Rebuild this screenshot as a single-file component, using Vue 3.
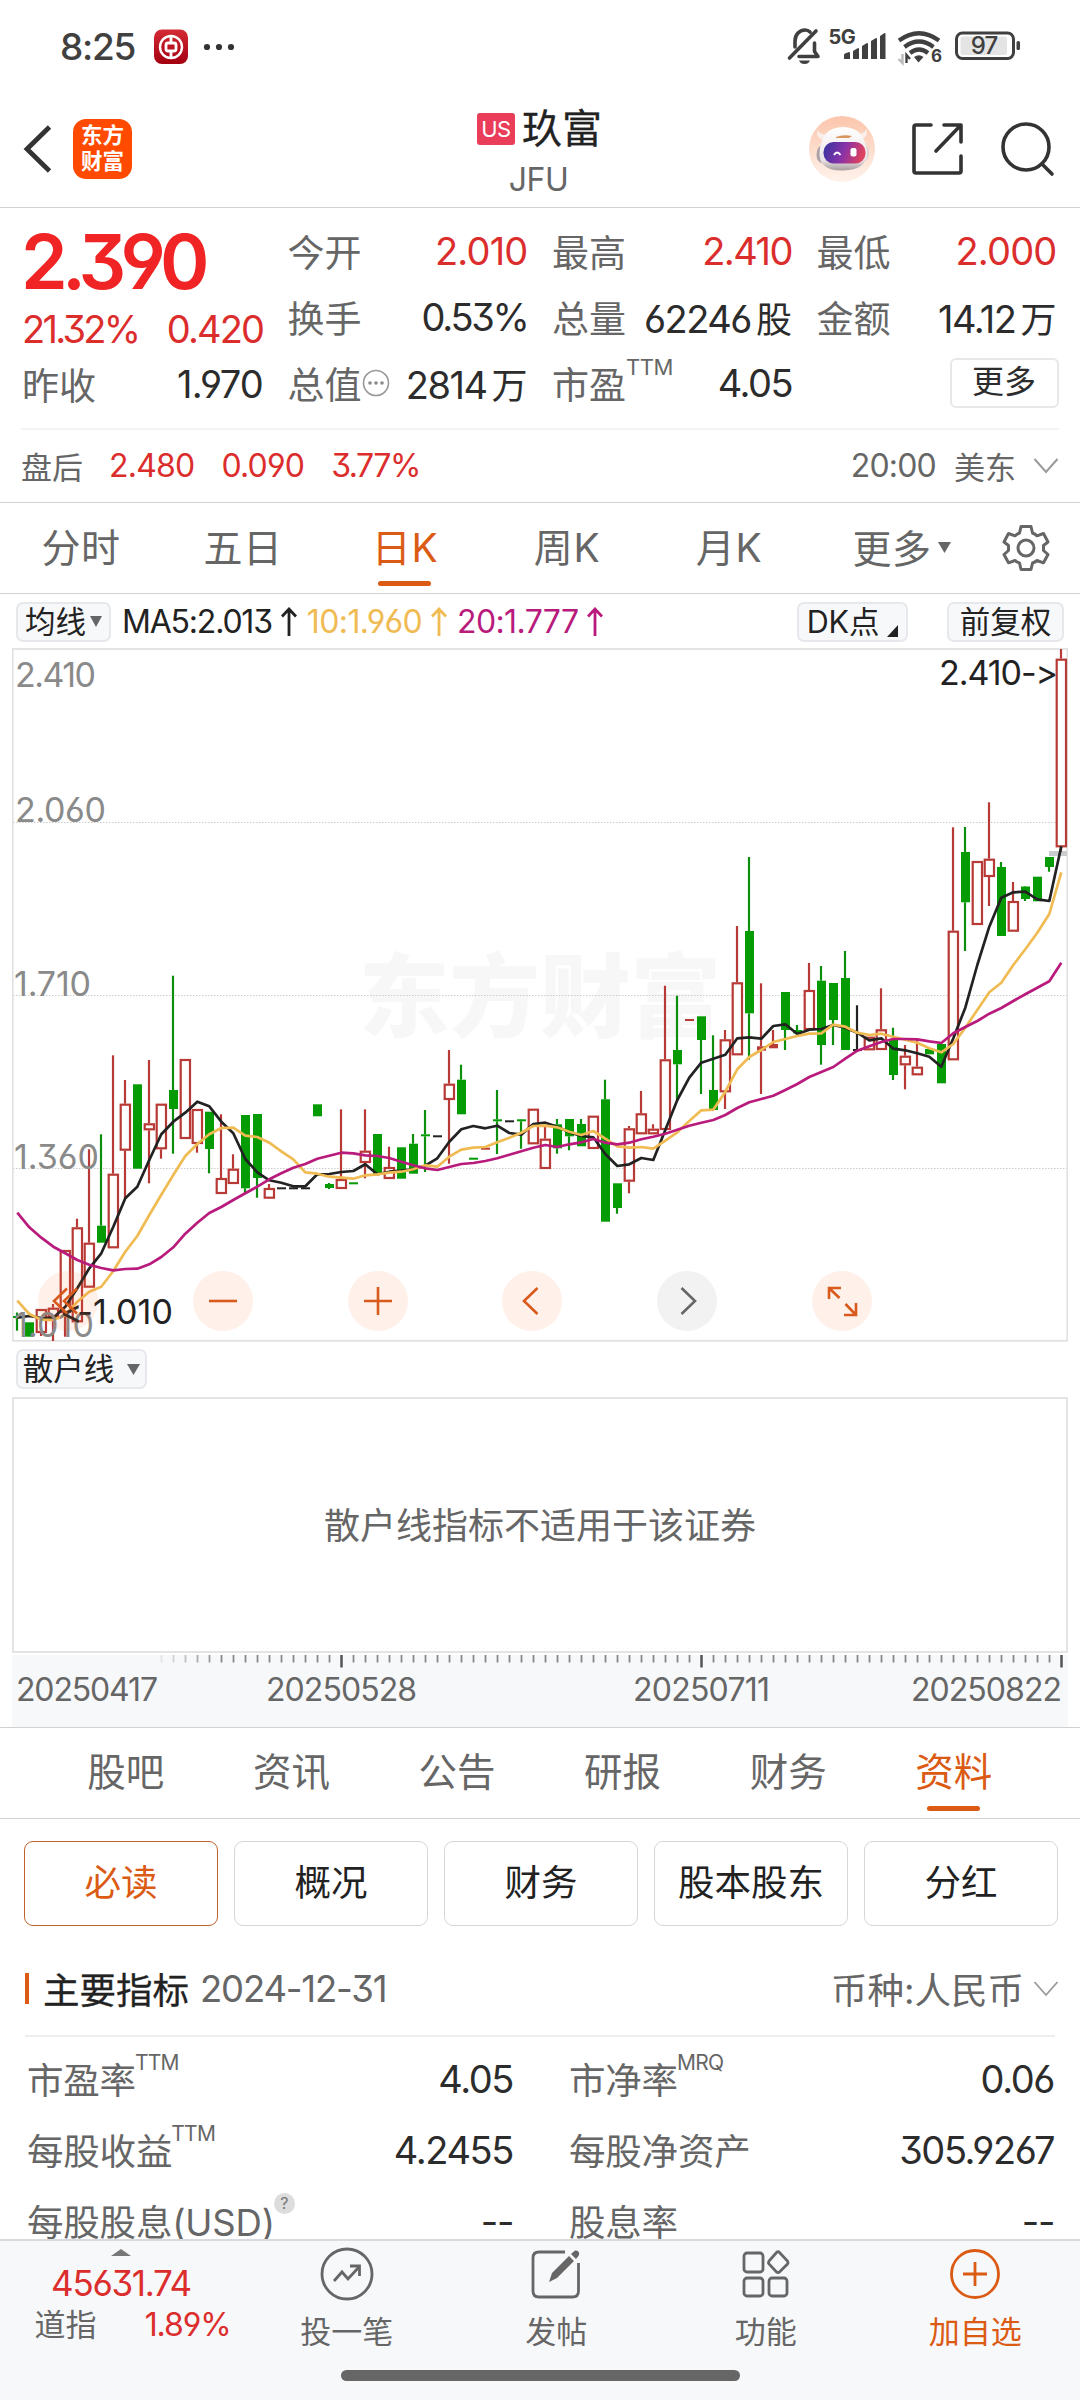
<script setup>
const stats = [
  [{ k: '今开', v: '2.010', c: 'up wide' }, { k: '换手', v: '0.53%', c: 'tight' }, { k: '总值', v: '2814', u: '万', info: true }],
  [{ k: '最高', v: '2.410', c: 'up' }, { k: '总量', v: '62246', u: '股' }, { k: '市盈', s: 'TTM', v: '4.05' }],
  [{ k: '最低', v: '2.000', c: 'up wide' }, { k: '金额', v: '14.12', u: '万' }, { more: true }],
]

const periods = ['分时', '五日', '日K', '周K', '月K']
const averages = [
  { t: 'MA5:2.013', c: 'ma5' },
  { t: '10:1.960', c: 'ma10' },
  { t: '20:1.777', c: 'ma20' },
]
const sections = ['股吧', '资讯', '公告', '研报', '财务', '资料']
const chips = ['必读', '概况', '财务', '股本股东', '分红']

const metrics = [
  [{ k: '市盈率', s: 'TTM', v: '4.05' }, { k: '市净率', s: 'MRQ', v: '0.06' }],
  [{ k: '每股收益', s: 'TTM', v: '4.2455' }, { k: '每股净资产', v: '305.9267' }],
  [{ k: '每股股息(USD)', q: true, v: '--' }, { k: '股息率', v: '--' }],
]

// kind, high, body top, body bottom, low
const candles = [
  ['g', 1312.5, 1316, 1318, 1330.7], ['g', 1322.3, 1322.3, 1336.7, 1336.7], ['r', 1309, 1309, 1333, 1336],
  ['r', 1304, 1307.7, 1318, 1341], ['r', 1250, 1250, 1313, 1336.7], ['r', 1218.7, 1227.3, 1322.3, 1322.3],
  ['r', 1149.3, 1242.7, 1287.7, 1287.7], ['g', 1134.3, 1225.7, 1242.7, 1242.7], ['r', 1055.3, 1173.7, 1248.3, 1248.3],
  ['r', 1080, 1103.7, 1150.7, 1198.3], ['g', 1084.3, 1084.3, 1168.7, 1168.7], ['r', 1060, 1123.3, 1130.3, 1183.3],
  ['r', 1103.7, 1103.7, 1149.3, 1158.7], ['g', 975.7, 1090, 1109, 1153.7], ['r', 1059, 1059, 1139, 1139],
  ['r', 1109, 1109, 1144, 1152.7], ['g', 1111.7, 1111.7, 1149, 1173.3], ['r', 1114.3, 1178, 1194, 1194],
  ['r', 1154.3, 1168.7, 1184, 1184], ['g', 1115, 1115, 1188.3, 1193.3], ['g', 1114, 1114, 1178, 1197.7],
  ['r', 1184, 1188, 1198.7, 1198.7], ['k', 1187.3, 1187.3, 1189.3, 1189.3], ['k', 1187.3, 1187.3, 1189.3, 1189.3],
  ['k', 1187.3, 1187.3, 1189.3, 1189.3], ['g', 1104.3, 1104.3, 1116.3, 1116.3], ['g', 1183, 1184, 1188, 1189],
  ['r', 1109.3, 1179, 1189, 1189], ['g', 1182.3, 1182.3, 1184.3, 1184.3], ['r', 1109.3, 1150.7, 1163, 1178.3],
  ['g', 1134, 1134, 1174, 1174], ['r', 1146.7, 1167, 1179, 1179], ['g', 1147.3, 1147.3, 1178.7, 1178.7],
  ['g', 1134, 1143.7, 1173.7, 1173.7], ['g', 1110, 1134.3, 1136.3, 1172], ['k', 1135.3, 1135.3, 1137.3, 1137.3],
  ['r', 1050, 1083.7, 1100, 1163.7], ['g', 1064.7, 1079.7, 1114.3, 1114.3], ['g', 1157.7, 1157.7, 1159.7, 1159.7],
  ['s', 1147.7, 1147.7, 1149.7, 1149.7], ['g', 1090, 1119.3, 1121.3, 1154], ['k', 1120.3, 1120.3, 1122.3, 1122.3],
  ['g', 1119, 1119.3, 1121.3, 1148.7], ['r', 1108.7, 1108.7, 1144.3, 1144.3], ['r', 1126.7, 1138.7, 1169, 1169],
  ['g', 1119, 1124.3, 1148.3, 1153.7], ['g', 1119, 1119, 1136.3, 1150.3], ['g', 1119, 1124, 1146.3, 1146.3],
  ['r', 1115.7, 1115.7, 1149, 1149], ['g', 1079.7, 1099.3, 1221.7, 1221.7], ['g', 1183.3, 1183.3, 1208, 1213.7],
  ['r', 1126, 1128.3, 1181.7, 1193.3], ['r', 1091, 1113.3, 1134.3, 1134.3], ['r', 1124.3, 1128.7, 1134.3, 1134.3],
  ['r', 985.7, 1059.3, 1130, 1130], ['g', 995.7, 1050, 1064.3, 1100], ['s', 1019, 1019, 1021, 1021],
  ['g', 1016.3, 1016.3, 1040, 1094], ['g', 1035.3, 1090, 1110, 1110], ['r', 1030, 1039.3, 1092.3, 1109],
  ['r', 926, 982.3, 1055.3, 1055.3], ['g', 857, 931, 1013.3, 1059.7], ['s', 983.3, 1046.3, 1050.7, 1094],
  ['s', 1030, 1044, 1048.3, 1048.3], ['g', 992, 992, 1030, 1050], ['g', 1025, 1030, 1033.3, 1033.3],
  ['r', 963, 990, 1030, 1030], ['g', 966, 980.7, 1045, 1064.7], ['g', 983, 983, 1020, 1045],
  ['g', 951, 978, 1050, 1050], ['k', 1005.3, 1049, 1051, 1051], ['r', 1036.7, 1036.7, 1050.3, 1050.3],
  ['r', 988.3, 1029.3, 1050, 1050], ['g', 1027.7, 1039.3, 1075, 1080], ['r', 1045, 1055.7, 1065.3, 1089.3],
  ['r', 1040, 1066.7, 1075.3, 1075.3], ['g', 1049, 1049, 1054.3, 1054.3], ['g', 1044, 1044, 1083.3, 1083.3],
  ['r', 827.3, 930.7, 1060.3, 1060.3], ['g', 827, 852, 902.3, 951], ['r', 861, 861, 925, 925],
  ['r', 802.3, 858.7, 877, 906], ['g', 862, 867, 936, 936], ['r', 882, 901, 931.7, 931.7],
  ['g', 886, 886.5, 899, 901], ['g', 876.7, 876.7, 901.3, 901.3], ['g', 857, 857, 867, 871.7],
  ['r', 649, 658.7, 847.3, 851.7],
].map(([kind, high, top, bottom, low], i) => ({ kind, high, top, bottom, low, x: 17 + i * 12 }))

const toPoints = (ys) => ys.map((y, i) => `${17.3 + i * 12},${y}`).join(' ')
const ma5 = toPoints([1317.7, 1316, 1318, 1317.7, 1306.7, 1288.3, 1268.3, 1253.3, 1226.7, 1198.3, 1186.7, 1160, 1134.3, 1121.7, 1112.7, 1101.7, 1106.3, 1121.7, 1133.3, 1159, 1172.3, 1180.3, 1182.7, 1186.3, 1186.3, 1174.3, 1174, 1172, 1171, 1164.3, 1174.3, 1171.7, 1170.7, 1169.3, 1165.7, 1158.3, 1141.7, 1129.3, 1126, 1128.3, 1125.7, 1133, 1134.7, 1124, 1122.7, 1126.7, 1132.3, 1136, 1137.3, 1154, 1166, 1164.3, 1158, 1160, 1130, 1100, 1077.7, 1062.7, 1058.7, 1054.7, 1038.3, 1037.3, 1038.7, 1026, 1024.3, 1034, 1029.7, 1029, 1025, 1027.7, 1032.7, 1040.3, 1038.3, 1048.7, 1050.3, 1053.3, 1056.7, 1066.7, 1038.3, 1007.7, 965, 926.7, 897.7, 892.3, 891.7, 899.3, 901, 846.3])
const ma10 = toPoints([1300.7, 1314, 1319.7, 1320, 1315, 1301.7, 1291.7, 1286.7, 1271, 1251.7, 1236, 1215, 1194.7, 1175, 1156, 1144, 1134.3, 1128, 1127.7, 1135.7, 1137, 1142.7, 1151.3, 1159.3, 1172.3, 1173.7, 1176.7, 1177.7, 1178.7, 1175.3, 1174.3, 1172.7, 1171.7, 1169.3, 1165.3, 1166.7, 1156.7, 1149.7, 1147.7, 1147, 1142.3, 1137.7, 1132.7, 1126, 1125.7, 1127.3, 1131.7, 1135, 1131, 1138.7, 1146.3, 1147.7, 1147, 1148.7, 1140.7, 1132.3, 1121, 1110.3, 1109.7, 1091.7, 1069.3, 1057, 1050, 1042, 1039, 1036, 1033.7, 1033.3, 1024.7, 1026.7, 1032.7, 1035, 1033.7, 1036.7, 1039.7, 1042.7, 1048.3, 1052.3, 1044, 1027.7, 1010, 992.3, 982.7, 965, 949.3, 932.7, 914, 872.3])
const ma20 = toPoints([1212.7, 1227.3, 1237.7, 1246.7, 1253.3, 1260, 1264.7, 1268, 1270.3, 1269, 1268.7, 1264.3, 1257, 1247.3, 1233.7, 1222.7, 1213, 1207, 1200, 1193.3, 1186.7, 1179.3, 1173.3, 1167.7, 1164, 1158.7, 1155.7, 1152.7, 1153.3, 1155.3, 1156, 1158, 1161.7, 1165.3, 1168.3, 1170, 1167, 1164, 1163, 1161, 1158.3, 1154.7, 1151.3, 1147.7, 1145, 1147, 1144.3, 1142.3, 1139, 1142.7, 1144.3, 1142.7, 1139.3, 1136.7, 1133.7, 1129.7, 1125.7, 1122.7, 1120, 1115, 1108, 1102.3, 1099, 1095.7, 1090, 1084, 1077, 1072, 1067, 1058.7, 1050.7, 1046.3, 1042, 1039, 1039, 1039.3, 1041.3, 1043, 1033.3, 1027, 1021, 1013.7, 1008, 1001, 994.3, 987.7, 981.3, 962.7])

const ticks = Array.from({ length: 76 }, (_, n) => n + 12).map((i) => ({
  x: 17.5 + i * 12,
  major: i === 27 || i === 57 || i === 87,
  o: Math.min(1, (i - 11) / 6),
}))
</script>

<template>
  <div class="page">
    <header class="status">
      <span class="clock">8:25</span>
      <svg class="boc" width="36" height="36" viewBox="0 0 36 36">
        <defs><linearGradient id="bocg" x1="0" y1="0" x2="0" y2="1"><stop offset="0" stop-color="#d42a35" /><stop offset="1" stop-color="#a30010" /></linearGradient></defs>
        <rect x="1" y="0.5" width="34" height="34.5" rx="8" fill="url(#bocg)" />
        <g fill="none" stroke="#fff"><circle cx="18" cy="18" r="11" stroke-width="2.4" /><rect x="13" y="14" width="10" height="8" rx="2" stroke-width="2.8" /><path d="M18 6.500v7M18 22.500v7" stroke-width="2.8" /></g>
      </svg>
      <svg class="dots" width="34" height="10" viewBox="0 0 34 10" fill="#333"><circle cx="6" cy="5" r="3.1" /><circle cx="18" cy="5" r="3.1" /><circle cx="30" cy="5" r="3.1" /></svg>
      <svg class="sys" width="240" height="44" viewBox="786 24 240 44">
        <g fill="none" stroke="#404040" stroke-width="3.600" stroke-linecap="round" stroke-linejoin="round">
          <path d="M795 47V41c0-6 4-11 10-11 2 0 4 1 5 2M799 56.500h19l-3.500-5V43M789.500 58 816 31" />
        </g>
        <path d="M799 60.500h11q-1.500 3.500-5.500 3.500t-5.500-3.500z" fill="#404040" />
        <text x="828.500" y="44" class="fiveg">5G</text>
        <g fill="#404040">
          <path d="M844 59v-4q0-1 1-1.500l4-1.500q1 0 1 1v6zM853 59v-8l5-3q1 0 1 1v10zM862 59V46l5-3q1 0 1 1v15zM871 59V41l5-3q1 0 1 1v20zM880 59V36l4.500-3q1 0 1 1v25z" />
        </g>
        <g fill="none" stroke="#404040" stroke-width="4.200">
          <path d="M899 40.500q20-14.500 40 0M904.500 47q14.500-11 29 0M910 53q9-7 18 0" />
        </g>
        <path d="M914 57q5-3.500 9.500 0l-5 5.500z" fill="#404040" />
        <path d="M902.500 54v9l-4-4" stroke="#bbb" stroke-width="2.400" fill="none" />
        <path d="M906.500 63v-8l3.500 4" stroke="#404040" stroke-width="2.400" fill="none" />
        <text x="931" y="62" class="six">6</text>
        <rect x="956.500" y="33" width="57" height="25.500" rx="6" fill="#fff" stroke="#404040" stroke-width="3" />
        <rect x="960.500" y="36.500" width="46.500" height="18.500" rx="2" fill="#e4e4e4" />
        <rect x="1016.500" y="41" width="3.500" height="9" rx="1.500" fill="#404040" />
        <text x="984" y="53.800" text-anchor="middle" class="pct">97</text>
      </svg>
    </header>

    <header class="titlebar">
      <div class="left">
        <svg width="32" height="54" viewBox="0 0 32 54"><path d="M27.500 5 5 27l22.500 22" fill="none" stroke="#333" stroke-width="4.800" /></svg>
        <div class="logo"><span>东方</span><span>财富</span></div>
      </div>
      <div class="name">
        <div class="nm"><span class="us">US</span><span>玖富</span></div>
        <div class="code">JFU</div>
      </div>
      <div class="right">
        <svg width="66" height="68" viewBox="0 0 66 68">
          <defs>
            <linearGradient id="av" x1="0" y1="0" x2="0" y2="1"><stop offset="0" stop-color="#fbc5ab" /><stop offset="1" stop-color="#fff3ec" /></linearGradient>
            <linearGradient id="vis" x1="0" y1="0" x2="1" y2="0.200"><stop offset="0" stop-color="#3233a0" /><stop offset="0.550" stop-color="#8a32a8" /><stop offset="1" stop-color="#dc4260" /></linearGradient>
            <linearGradient id="head" x1="0" y1="0" x2="0" y2="1"><stop offset="0" stop-color="#fff" /><stop offset="0.750" stop-color="#ece4e6" /><stop offset="1" stop-color="#a79da0" /></linearGradient>
          </defs>
          <circle cx="33" cy="34" r="33" fill="url(#av)" />
          <path d="M14 25q-8-3-5.500-10 2 5 10 4zM53 24q7-3 4.500-10-2 5-10 5z" fill="#fbeee9" />
          <path d="M14 30q-5 1-6 6-2 9 4 12l3-2z" fill="#aaa2a6" /><path d="M54 30q5 1 6 6 1 8-5 11z" fill="#e0d3d4" />
          <path d="M10.500 38Q12 12 34 12t24 26q0 17-24 17.500T10.500 38z" fill="url(#head)" />
          <path d="M27 22q7-3 16-1l-3 2H27z" fill="#d9965c" />
          <rect x="14.500" y="27" width="42" height="21.500" rx="10" fill="url(#vis)" />
          <path d="M25 40q3-5 6.500 0" fill="none" stroke="#fff" stroke-width="2" /><rect x="41.500" y="33" width="6" height="8.500" rx="2" fill="#fff" />
        </svg>
        <svg width="54" height="54" viewBox="0 0 54 54" fill="none" stroke="#333" stroke-width="3.600" stroke-linecap="round" stroke-linejoin="round"><path d="M20 3H5Q3 3 3 5v44q0 2 2 2h43q2 0 2-2V34M33 3h17v17M49 4 25 29" /></svg>
        <svg width="54" height="56" viewBox="0 0 54 56" fill="none" stroke="#333" stroke-width="3.600" stroke-linecap="round"><circle cx="25" cy="26" r="23" /><path d="m41 43 10 10" /></svg>
      </div>
    </header>

    <section class="quote">
      <div class="grid">
        <div class="main">
          <div class="price">2.390</div>
          <div class="line chg"><span class="num up tight">21.32%</span><span class="num up">0.420</span></div>
          <div class="line"><span class="lab">昨收</span><span class="num wide">1.970</span></div>
        </div>
        <div v-for="(col, ci) in stats" :key="ci" class="scol">
          <div v-for="(s, si) in col" :key="si" class="line">
            <template v-if="s.more"><span></span><span class="morebtn">更多</span></template>
            <template v-else>
              <span class="lab">{{ s.k }}<sup v-if="s.s">{{ s.s }}</sup>
                <svg v-if="s.info" width="28" height="28" viewBox="0 0 28 28"><circle cx="14" cy="14" r="12.500" fill="none" stroke="#999" stroke-width="1.600" /><g fill="#888"><circle cx="8" cy="14" r="1.800" /><circle cx="14" cy="14" r="1.800" /><circle cx="20" cy="14" r="1.800" /></g></svg>
              </span>
              <span class="num" :class="s.c">{{ s.v }}<i v-if="s.u">{{ s.u }}</i></span>
            </template>
          </div>
        </div>
      </div>
      <div class="after">
        <span class="alab">盘后</span><span class="up">2.480</span><span class="up">0.090</span><span class="up">3.77%</span>
        <span class="time">20:00</span><span class="alab east">美东</span>
        <svg width="26" height="18" viewBox="0 0 26 18"><path d="m1.500 2 11.500 13L24.500 2" fill="none" stroke="#999" stroke-width="2" /></svg>
      </div>
    </section>

    <nav class="periods">
      <span v-for="p in periods" :key="p" :class="['tab', { on: p === '日K' }]">{{ p }}</span>
      <span class="tab wide">更多<svg width="14" height="12" viewBox="0 0 14 12"><path d="M0 0h13L6.500 11z" fill="#666" /></svg></span>
      <svg class="gear" width="50" height="50" viewBox="-25 -25 50 50" fill="none" stroke="#666" stroke-width="3" stroke-linejoin="round">
        <path d="M-5-21.500H5L6.500-15Q9-14 11-12.200L17.500-14.500 22-6 17.500-2.500V2.500L22 6.500 17.500 14.800 11 12.500Q9 14.200 6.500 15L5 21.500H-5L-6.500 15Q-9 14.200-11 12.500L-17.500 14.800-22 6.500-17.500 2.500V-2.500L-22-6-17.500-14.500-11-12.200Q-9-14-6.500-15z" /><circle r="8" />
      </svg>
    </nav>

    <div class="mabar">
      <span class="pill avg">均线<svg width="12" height="11" viewBox="0 0 12 11"><path d="M0 0h12L6 11z" fill="#666" /></svg></span>
      <span v-for="a in averages" :key="a.t" :class="['ma', a.c]">{{ a.t }}<svg width="16" height="30" viewBox="0 0 16 30"><path d="M8 29V2M1 9.500 8 2l7 7.500" fill="none" stroke="currentColor" stroke-width="2.800" /></svg></span>
      <span class="pill dk">DK点<svg width="11" height="12" viewBox="0 0 11 12"><path d="M11 0v12H0z" fill="#222" /></svg></span>
      <span class="pill fq">前复权</span>
    </div>

    <section class="chart">
      <svg width="1056" height="694" viewBox="12 648 1056 694">
        <text x="359" y="1030" class="wm">东方财富</text>
        <g stroke="#ccc" stroke-width="1" stroke-dasharray="1.500 1.500"><path d="M13 822.500H1067M13 995.500H1067M13 1168.500H1067" /></g>
        <rect x="12.700" y="649" width="1054.600" height="691.800" fill="none" stroke="#e2e2e2" stroke-width="1.800" />
        <rect x="1049" y="851" width="18" height="5" fill="#c9cdd0" />
        <g v-for="(c, i) in candles" :key="i" :class="c.kind">
          <path v-if="c.high < c.top" :d="`M${c.x} ${c.high}V${c.top}`" />
          <path v-if="c.low > c.bottom" :d="`M${c.x} ${c.bottom}V${c.low}`" />
          <rect v-if="c.kind === 'r'" :x="c.x - 4.300" :y="c.top + 1" width="9.300" :height="c.bottom - c.top - 2" />
          <rect v-else :x="c.x - 4" :y="c.top" width="9" :height="c.bottom - c.top" />
        </g>
        <g class="curve"><polyline :points="ma5" stroke="#222" /><polyline :points="ma10" stroke="#efbb52" /><polyline :points="ma20" stroke="#b81b7c" /></g>
        <g class="ax">
          <text x="15" y="687" textLength="81">2.410</text><text x="15" y="822" textLength="91">2.060</text><text x="14" y="996" textLength="77">1.710</text><text x="14" y="1169" textLength="85">1.360</text><text x="14" y="1337" textLength="80">1.010</text>
        </g>
        <g class="mark"><text x="939" y="685" textLength="119">2.410-&gt;</text><text x="60" y="1324" textLength="33">&lt;-</text><text x="93" y="1324" textLength="80">1.010</text></g>
      </svg>
      <div class="ctl">
        <span><svg width="60" height="60" viewBox="0 0 60 60"><path d="M29 17.500 16 30l13 12.500M39 17.500 26 30l13 12.500" /></svg></span>
        <span><svg width="60" height="60" viewBox="0 0 60 60"><path d="M16 30h28" /></svg></span>
        <span><svg width="60" height="60" viewBox="0 0 60 60"><path d="M16 30h28M30 16v28" /></svg></span>
        <span><svg width="60" height="60" viewBox="0 0 60 60"><path d="M35.500 17 22 30l13.500 13" /></svg></span>
        <span class="off"><svg width="60" height="60" viewBox="0 0 60 60"><path d="M24.500 17 38 30 24.500 43" /></svg></span>
        <span><svg width="60" height="60" viewBox="0 0 60 60"><path d="M17 28V17h12M17.500 17.500 27.500 27M44 32v12H32M43.500 43.500 33.500 33" /></svg></span>
      </div>
    </section>

    <div class="subbar"><span class="pill">散户线<svg width="13" height="11" viewBox="0 0 13 11"><path d="M0 0h13L6.500 11z" fill="#666" /></svg></span></div>
    <section class="subchart">散户线指标不适用于该证券</section>

    <svg class="axis" width="1056" height="73" viewBox="12 1654 1056 73">
      <rect x="12" y="1655" width="1056" height="72" fill="#f7f8fa" />
      <path v-for="t in ticks" :key="t.x" :d="`M${t.x} 1655V${t.major ? 1667.5 : 1662.5}`" :stroke="t.major ? '#555' : '#888'" :stroke-width="t.major ? 2.5 : 1.8" :opacity="t.o" />
      <text x="16" y="1701" textLength="142">20250417</text><text x="266" y="1701" textLength="151">20250528</text><text x="633" y="1701" textLength="137">20250711</text><text x="911" y="1701" textLength="151">20250822</text>
    </svg>

    <nav class="sections">
      <span v-for="s in sections" :key="s" :class="['tab', { on: s === '资料' }]">{{ s }}</span>
    </nav>

    <div class="chips"><span v-for="(c, i) in chips" :key="c" :class="{ on: i === 0 }">{{ c }}</span></div>

    <section class="info">
      <div class="head">
        <i class="bar"></i><b>主要指标</b><span class="date">2024-12-31</span><span class="cur">币种:人民币</span>
        <svg width="26" height="18" viewBox="0 0 26 18"><path d="m1.500 2 11.500 13L24.500 2" fill="none" stroke="#999" stroke-width="1.800" /></svg>
      </div>
      <div v-for="(row, ri) in metrics" :key="ri" class="mrow">
        <div v-for="m in row" :key="m.k" class="cell">
          <span class="lab">{{ m.k }}<sup v-if="m.s">{{ m.s }}</sup><sup v-if="m.q" class="q">?</sup></span>
          <span class="num">{{ m.v }}</span>
        </div>
      </div>
    </section>

    <footer class="bottom">
      <div class="acts">
        <div class="index">
          <svg width="20" height="7" viewBox="0 0 20 7"><path d="M0 7 10 0l10 7z" fill="#777" /></svg>
          <span class="pt up">45631.74</span>
          <div class="dj"><span>道指</span><span class="up dp">1.89%</span></div>
        </div>
        <div class="act">
          <svg width="56" height="56" viewBox="-28 -28 56 56"><circle r="25" /><path d="M-13 7-5-2 1 5 12-7" /><path d="M3-8H12.500V2" /></svg><span>投一笔</span>
        </div>
        <div class="act">
          <svg width="56" height="56" viewBox="-28 -28 56 56"><path d="M9-22H-17q-6 0-6 6V17q0 6 6 6H16.500q6 0 6-6V-11" /><path class="solid" d="M-7 8-4-1 13-18 18-13 1 4zM15-20 19-23.500Q22-24 23-21.500T20-15z" /></svg><span>发帖</span>
        </div>
        <div class="act">
          <svg width="56" height="56" viewBox="-28 -28 56 56"><rect x="-22" y="-21" width="19" height="19" rx="3" /><rect x="-22" y="4" width="19" height="18" rx="3" /><rect x="3" y="4" width="18" height="18" rx="3" /><path d="M10.500-21.500Q12-23 13.500-21.500L21.500-13Q22.500-11.500 21.500-10L13.500-2Q12-1 10.500-2L3-10Q2-11.500 3-13z" /></svg><span>功能</span>
        </div>
        <div class="act on">
          <svg width="56" height="56" viewBox="-28 -28 56 56"><circle r="23.500" /><path d="M-12 0H12M0-12V12" /></svg><span>加自选</span>
        </div>
      </div>
      <div class="home"></div>
    </footer>
  </div>
</template>

<style>
body { margin: 0; background: #fff; }
</style>

<style scoped>
.page { width: 1080px; height: 2400px; display: flex; flex-direction: column; overflow: hidden; background: #fff; color: #222; font-family: Inter, "Noto Sans CJK SC", sans-serif; font-feature-settings: "cv03", "cv04", "cv09"; white-space: nowrap; box-sizing: border-box; }
.page * { box-sizing: border-box; }
.page > * { flex: none; }
svg { display: block; flex: none; }
i { font-style: normal; }

.status { height: 92px; display: flex; align-items: center; padding: 0 54px 0 60px; }
.clock { font-size: 37px; font-weight: 500; color: #404040; letter-spacing: -1.300px; width: 93px; }
.boc { margin-top: 2px; }
.dots { margin-left: 12px; margin-top: 2px; }
.sys { margin-left: auto; }
.fiveg { font: 700 20px Inter, sans-serif; fill: #404040; letter-spacing: -0.5px; }
.six { font: 700 17px Inter, sans-serif; fill: #404040; }
.pct { font: 500 24px Inter, sans-serif; fill: #404040; letter-spacing: -1px; }

.titlebar { height: 116px; border-bottom: 1px solid #d2d2d2; display: grid; grid-template-columns: 440px 200px 440px; }
.left { display: flex; align-items: center; padding: 0 0 2px 22px; gap: 19px; }
.logo { width: 59px; height: 60px; border-radius: 13px; background: #ff4a00; color: #fff; display: flex; flex-direction: column; align-items: center; justify-content: center; font-size: 21.500px; line-height: 26px; font-weight: 700; padding-bottom: 2px; }
.name { display: flex; flex-direction: column; align-items: center; padding-top: 11px; }
.nm { display: flex; align-items: center; gap: 7px; font-size: 40px; line-height: 52px; font-weight: 400; margin-right: 1px; -webkit-text-stroke: 0.300px currentColor; }
.us { width: 38px; height: 32px; border-radius: 3px; background: #e93d5a; color: #fff; font-size: 22px; line-height: 33px; font-weight: 400; text-align: center; letter-spacing: -0.5px; -webkit-text-stroke: 0; }
.code { font-size: 32px; line-height: 50px; color: #666; letter-spacing: -0.5px; margin-right: 3px; }
.right { display: flex; align-items: center; justify-content: flex-end; padding-right: 25px; padding-bottom: 1px; }
.right svg:nth-child(1) { margin-right: 1px; }
.right svg:nth-child(2) { margin-left: 35px; }
.right svg:nth-child(3) { margin-left: 36px; }

.quote { height: 295px; border-bottom: 1px solid #d2d2d2; padding: 0 21px; }
.grid { height: 222px; border-bottom: 2px solid #f3f3f3; display: grid; grid-template-columns: repeat(4, 240px); column-gap: 24.500px; padding-left: 2px; padding-top: 10px; }
.line { height: 66px; display: flex; align-items: center; justify-content: space-between; }
.main .line.chg { height: 55px; }
.main .price { height: 83px; line-height: 88px; font-size: 75px; font-weight: 600; color: #f02424; letter-spacing: -5.700px; margin-left: -2px; }
.main .line:last-child { height: 55px; }
.main .lab { margin-left: -1px; }
.lab { font-size: 37px; color: #666; position: relative; display: flex; align-items: center; }
.lab sup { font-size: 22px; line-height: 28px; align-self: flex-start; margin-top: -3px; letter-spacing: -0.500px; }
.num { font-size: 38px; color: #2c2c2c; letter-spacing: -1.500px; }
.num.wide { letter-spacing: -0.800px; }
.num.tight { letter-spacing: -2.300px; }
.num i { font-size: 36px; margin-left: 5px; letter-spacing: 0; }
.up, .num.up { color: #dc2d2d; }
.chg .num.tight { margin-left: -1px; letter-spacing: -2.700px; }
.chg .num { letter-spacing: -1.900px; }
.morebtn { width: 109px; height: 50px; border: 2px solid #e8e8ea; border-radius: 6px; font-size: 32px; line-height: 44px; text-align: center; margin-right: -2px; color: #2c2c2c; }
.after { height: 71px; display: flex; align-items: center; font-size: 32px; letter-spacing: -0.800px; }
.after .up { margin-left: 27px; }
.after .alab + .up { margin-left: 26px; }
.after .up:nth-child(4) { letter-spacing: -1.500px; }
.alab { color: #666; font-size: 31px; letter-spacing: 0; }
.time { margin-left: auto; color: #666; }
.east { margin: 0 17px 0 18px; }

.periods { height: 91px; border-bottom: 1px solid #d2d2d2; display: flex; align-items: center; }
.tab { position: relative; height: 90px; line-height: 89px; width: 162px; text-align: center; font-size: 39px; color: #666; }
.periods .tab { letter-spacing: 0.600px; }
.tab.on { color: #db5a14; }
.tab.on::after { content: ""; position: absolute; left: 50%; bottom: 7px; width: 53px; height: 5px; margin-left: -27px; border-radius: 3px; background: #db5a14; }
.tab.wide { width: 184px; display: flex; align-items: center; justify-content: center; gap: 6px; }
.gear { margin-left: 7px; }

.mabar { height: 54px; display: flex; align-items: center; padding: 1px 16px 0; font-size: 32px; }
.pill { height: 40px; border: 2px solid #e6e8ec; border-radius: 7px; background: #f7f8fa; display: flex; align-items: center; justify-content: center; font-size: 30.500px; line-height: 36px; color: #222; }
.avg { width: 95px; gap: 4px; margin-right: 11px; }
.ma { display: flex; align-items: center; gap: 9px; letter-spacing: -0.600px; margin-right: 10px; }
.ma5 { color: #222; letter-spacing: -1.200px; }
.ma10 { color: #efbb52; }
.ma20 { color: #b81b7c; }
.dk { width: 111px; margin-left: auto; letter-spacing: -0.200px; gap: 8px; }
.dk svg { margin-top: 18px; }
.fq { width: 117px; margin-left: 39px; }

.chart { position: relative; height: 694px; margin-left: 12px; }
.wm { font: 900 90.500px "Noto Sans CJK SC", sans-serif; fill: #f7f7f7; }
.r path, .s path { stroke: #b83a36; stroke-width: 2.200; }
.r rect { fill: #fff; stroke: #b83a36; stroke-width: 2.200; }
.s rect { fill: #b83a36; }
.g path { stroke: #0c8f0c; stroke-width: 2.200; }
.g rect { fill: #049b04; }
.k path { stroke: #222; stroke-width: 2.200; }
.k rect { fill: #222; }
.curve { fill: none; stroke-width: 2.700; stroke-linejoin: round; }
.ax { font-size: 34px; fill: #8a8a8a; }
.mark { font-size: 34px; fill: #222; font-feature-settings: "calt" 0, "cv03", "cv04", "cv09"; }
.ctl { position: absolute; left: 26px; top: 623px; display: flex; gap: 94.800px; }
.ctl span { width: 60px; height: 60px; border-radius: 50%; background: rgba(255, 112, 40, 0.100); }
.ctl path { fill: none; stroke: #d85a1c; stroke-width: 2.600; }
.ctl .off { background: #f2f2f2; }
.ctl .off path { stroke: #666; }

.subbar { height: 55px; padding: 7px 16px 0; display: flex; }
.subbar .pill { width: 131px; gap: 13px; }
.subchart { height: 256px; margin: 0 12px; border: 2px solid #e4e4e4; display: flex; align-items: center; justify-content: center; font-size: 36px; color: #666; padding-bottom: 5px; }
.axis { margin: 1px 0 0 12px; font-size: 32px; fill: #666; }

.sections { height: 92px; border-top: 1px solid #d2d2d2; border-bottom: 1px solid #d2d2d2; display: flex; padding-left: 43px; }
.sections .tab { width: 165.600px; font-size: 38.500px; }
.chips { display: flex; gap: 16px; padding: 22px 0 0 24px; }
.chips span { width: 194px; height: 85px; border: 1.500px solid #d6d6d6; border-radius: 9px; text-align: center; line-height: 82px; font-size: 36.500px; }
.chips .on { color: #db5a14; border-color: #c0622c; }

.info { height: 313px; padding: 0 25px; overflow: hidden; }
.head { height: 111px; padding-top: 16px; border-bottom: 2px solid #eee; display: flex; align-items: center; font-size: 36.500px; color: #666; }
.bar { width: 4px; height: 31px; background: #db5a14; margin-right: 14px; }
.head b { font-weight: 400; color: #222; margin-right: 11px; -webkit-text-stroke: 0.300px currentColor; }
.date { letter-spacing: -1.200px; }
.cur { margin-left: auto; margin-right: 9px; }
.head svg { margin-right: -4px; }
.mrow { height: 71px; display: grid; grid-template-columns: 488px 487px; column-gap: 54px; position: relative; }
.mrow:nth-child(2) { margin-top: 6px; }
.cell { display: flex; justify-content: space-between; align-items: center; padding-left: 2px; }
.cell .lab { font-size: 36.500px; letter-spacing: -0.200px; }
.cell .lab sup { font-size: 21px; letter-spacing: -0.700px; margin-left: -1px; }
.cell .num { letter-spacing: -1.400px; }
.cell .lab .q { width: 21px; height: 21px; border-radius: 50%; background: #ddd; color: #777; font-size: 16px; line-height: 21px; text-align: center; margin-top: -1px; letter-spacing: 0; }

.bottom { height: 161px; border-top: 2px solid #d8dadd; background: #f7f8fa; display: flex; flex-direction: column; align-items: center; }
.acts { width: 1080px; height: 129px; display: flex; }
.index { width: 242px; padding-top: 8px; display: flex; flex-direction: column; align-items: center; }
.pt { font-size: 35px; line-height: 42px; margin-top: 6px; letter-spacing: -1.300px; }
.dj { width: 196px; display: flex; justify-content: space-between; font-size: 31px; line-height: 42px; color: #666; margin-left: 23px; }
.dp { font-size: 32px; letter-spacing: -1.100px; }
.act { width: 209.500px; padding-top: 5px; display: flex; flex-direction: column; align-items: center; font-size: 31px; line-height: 42px; color: #666; gap: 9px; }
.act svg { fill: none; stroke: #666; stroke-width: 2.800; }
.act .solid { fill: #666; stroke: none; }
.act.on { color: #db5a14; }
.act.on svg { stroke: #db5a14; }
.home { width: 399px; height: 11px; border-radius: 6px; background: #666; }
</style>
